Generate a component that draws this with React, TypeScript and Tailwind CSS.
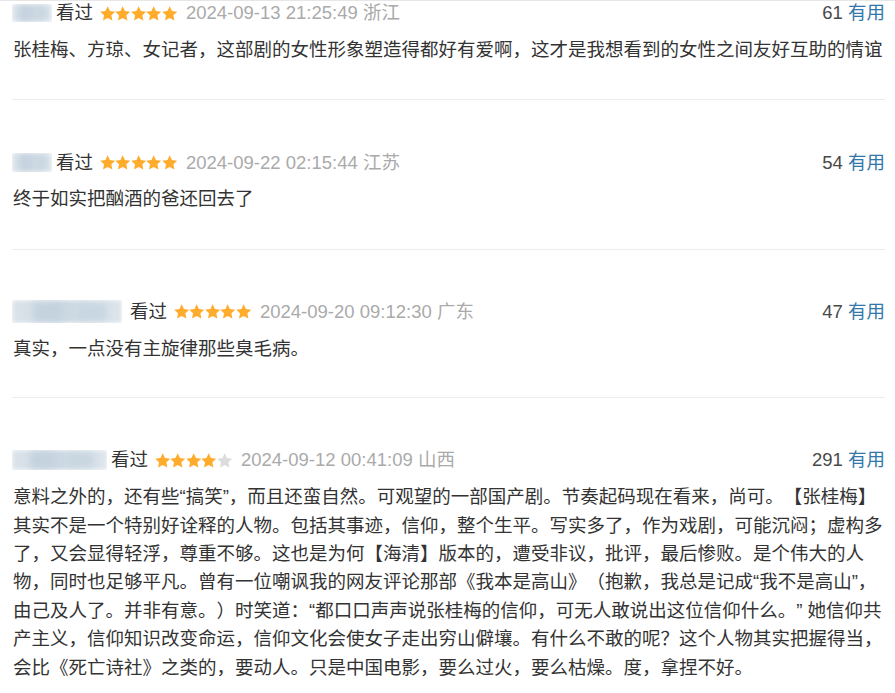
import React from "react";

const FONT = '"Liberation Sans", Arial, "Noto Sans CJK SC", sans-serif';

function Star({ on }: { on: boolean }) {
  return (
    <svg width="15.4" height="15" viewBox="0 0 24 23" className="block">
      <path
        d="M12 0.3l3.5 7.4 8.2 1-6 5.6 1.6 8.1L12 18.4l-7.3 4 1.6-8.1-6-5.6 8.2-1z"
        fill={on ? "#ffac2d" : "#dcdcdc"}
      />
    </svg>
  );
}

function Avatar({ w, h }: { w: number; h: number }) {
  return (
    <div
      className="relative overflow-hidden shrink-0"
      style={{ width: w, height: h }}
    >
      <div className="absolute inset-0 bg-gradient-to-r from-[#dbe3ea] via-[#ccd8e2] to-[#dde5ec] blur-[2px]" />
      <div className="absolute left-[20%] top-[10%] w-[25%] h-[80%] bg-[#c3d2de] blur-[3px]" />
      <div className="absolute left-[60%] top-[15%] w-[25%] h-[70%] bg-[#c8d6e1] blur-[3px]" />
    </div>
  );
}

type Review = {
  avatarW: number;
  avatarH: number;
  gap: number;
  stars: number;
  date: string;
  loc: string;
  votes: string;
  pb: string;
  lines: string[];
};

const reviews: Review[] = [
  {
    avatarW: 40,
    avatarH: 18,
    gap: 4,
    stars: 5,
    date: "2024-09-13 21:25:49",
    loc: "浙江",
    votes: "61",
    pb: "pb-[35px]",
    lines: [
      "张桂梅、方琼、女记者，这部剧的女性形象塑造得都好有爱啊，这才是我想看到的女性之间友好互助的情谊",
    ],
  },
  {
    avatarW: 40,
    avatarH: 19,
    gap: 4,
    stars: 5,
    date: "2024-09-22 02:15:44",
    loc: "江苏",
    votes: "54",
    pb: "pb-[35px]",
    lines: ["终于如实把酗酒的爸还回去了"],
  },
  {
    avatarW: 110,
    avatarH: 23,
    gap: 8,
    stars: 5,
    date: "2024-09-20 09:12:30",
    loc: "广东",
    votes: "47",
    pb: "pb-[34px]",
    lines: ["真实，一点没有主旋律那些臭毛病。"],
  },
  {
    avatarW: 95,
    avatarH: 20,
    gap: 4,
    stars: 4,
    date: "2024-09-12 00:41:09",
    loc: "山西",
    votes: "291",
    pb: "pb-[30px]",
    lines: [
      "意料之外的，还有些“搞笑”，而且还蛮自然。可观望的一部国产剧。节奏起码现在看来，尚可。【张桂梅】",
      "其实不是一个特别好诠释的人物。包括其事迹，信仰，整个生平。写实多了，作为戏剧，可能沉闷；虚构多",
      "了，又会显得轻浮，尊重不够。这也是为何【海清】版本的，遭受非议，批评，最后惨败。是个伟大的人",
      "物，同时也足够平凡。曾有一位嘲讽我的网友评论那部《我本是高山》（抱歉，我总是记成“我不是高山”，",
      "由己及人了。并非有意。）时笑道：“都口口声声说张桂梅的信仰，可无人敢说出这位信仰什么。” 她信仰共",
      "产主义，信仰知识改变命运，信仰文化会使女子走出穷山僻壤。有什么不敢的呢？这个人物其实把握得当，",
      "会比《死亡诗社》之类的，要动人。只是中国电影，要么过火，要么枯燥。度，拿捏不好。",
    ],
  },
];

export default function App() {
  return (
    <div
      className="w-[895px] h-[693px] overflow-hidden bg-white border-t border-[#e6e6e6] [text-spacing-trim:space-all]"
      style={{ fontFamily: FONT }}
    >
      <div className="-mt-[2px] pl-[12px] pr-[10px]">
        {reviews.map((r, i) => (
          <div
            key={i}
            className={
              (i === 0 ? "pt-0 " : "pt-[48px] ") +
              r.pb +
              (i === 3 ? "" : " border-b border-[#ececec]")
            }
          >
            <div className="flex items-center h-[28px] text-[18.5px]">
              <Avatar w={r.avatarW} h={r.avatarH} />
              <span className="text-[#333]" style={{ marginLeft: r.gap }}>
                看过
              </span>
              <span className="flex ml-[7px]">
                {[0, 1, 2, 3, 4].map((k) => (
                  <Star key={k} on={k < r.stars} />
                ))}
              </span>
              <span className="ml-[9px] text-[#aaa]">
                {r.date} {r.loc}
              </span>
              <span className="ml-auto text-[#494949]">
                {r.votes} <span className="text-[#3377aa]">有用</span>
              </span>
            </div>
            <div className="mt-[9px] pl-[1px] text-[18.5px] leading-[28.4px] text-[#333] whitespace-nowrap">
              {r.lines.map((l, j) => (
                <div key={j}>{l}</div>
              ))}
            </div>
          </div>
        ))}
      </div>
    </div>
  );
}
